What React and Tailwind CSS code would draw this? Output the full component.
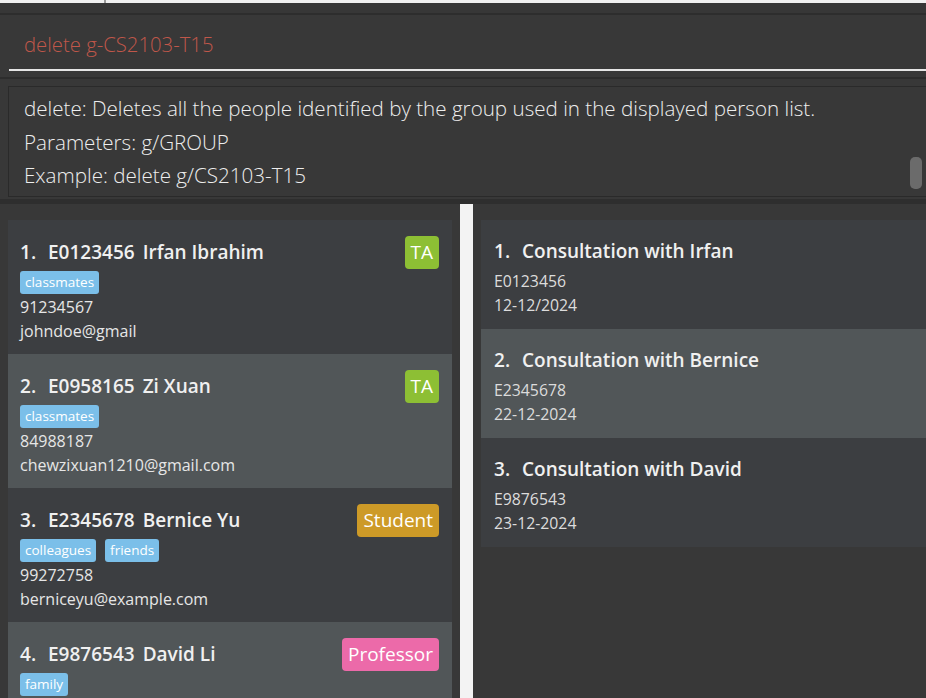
import React from "react";

const persons = [
  { n: 1, id: "E0123456", name: "Irfan Ibrahim", role: "TA", tags: ["classmates"], phone: "91234567", email: "johndoe@gmail", even: false },
  { n: 2, id: "E0958165", name: "Zi Xuan", role: "TA", tags: ["classmates"], phone: "84988187", email: "chewzixuan1210@gmail.com", even: true },
  { n: 3, id: "E2345678", name: "Bernice Yu", role: "Student", tags: ["colleagues", "friends"], phone: "99272758", email: "berniceyu@example.com", even: false },
  { n: 4, id: "E9876543", name: "David Li", role: "Professor", tags: ["family"], phone: "", email: "", even: true },
];

const consults = [
  { n: 1, title: "Consultation with Irfan", id: "E0123456", date: "12-12/2024", even: false },
  { n: 2, title: "Consultation with Bernice", id: "E2345678", date: "22-12-2024", even: true },
  { n: 3, title: "Consultation with David", id: "E9876543", date: "23-12-2024", even: false },
];

function RoleBadge({ role }) {
  const cls =
    role === "TA"
      ? "bg-[#8dbf34]"
      : role === "Student"
      ? "bg-[#cd9a27]"
      : "bg-[#ec6aa9]";
  return (
    <div className={`${cls} h-[33px] px-[6px] rounded-[4px] flex items-center text-[19px] text-white leading-none`}>
      {role}
    </div>
  );
}

function PersonCard({ p }) {
  return (
    <div className={`${p.even ? "bg-[#515658]" : "bg-[#3c3e41]"} h-[134px] shrink-0 pl-[12px] pr-[13px] pt-[16px]`}>
      <div className="flex items-center justify-between h-[33px]">
        <div className="flex items-center text-[19px] font-semibold text-[#f0f0f0]">
          <span className="w-[28px]">{p.n}.</span>
          <span className="mr-[8px]">{p.id}</span>
          <span>{p.name}</span>
        </div>
        <RoleBadge role={p.role} />
      </div>
      <div className="flex gap-[9px] mt-[2px]">
        {p.tags.map((t) => (
          <span key={t} className="bg-[#7bbfe9] text-white text-[13.5px] h-[23px] leading-[23px] px-[5px] rounded-[3px]">
            {t}
          </span>
        ))}
      </div>
      <div className="pt-[1px]">
        {p.phone && <div className="text-[16px] leading-[24px] text-[#e6e6e6]">{p.phone}</div>}
        {p.email && <div className="text-[16px] leading-[24px] text-[#e6e6e6]">{p.email}</div>}
      </div>
    </div>
  );
}

function ConsultCard({ c }) {
  return (
    <div className={`${c.even ? "bg-[#515658]" : "bg-[#3c3e41]"} h-[109px] shrink-0 pl-[13px] pt-[16px]`}>
      <div className="flex items-center h-[30px] text-[19px] font-semibold text-[#f0f0f0]">
        <span className="w-[28px]">{c.n}.</span>
        <span>{c.title}</span>
      </div>
      <div className="mt-[3px] text-[15.8px] leading-[24px] text-[#dcdcdc]">{c.id}</div>
      <div className="text-[15.8px] leading-[24px] text-[#dcdcdc]">{c.date}</div>
    </div>
  );
}

export default function App() {
  return (
    <div
      className="w-[926px] h-[698px] bg-[#383838] overflow-hidden flex flex-col"
      style={{ fontFamily: '"Segoe UI", "Open Sans", "Noto Sans", sans-serif' }}
    >
      <div className="h-[3px] bg-[#f0f0f0] shrink-0 relative">
        <div className="absolute left-[104px] top-0 w-[2px] h-[3px] bg-[#9a9a9a]" />
      </div>
      <div className="h-[10px] shrink-0 bg-[#373737]" />
      <div className="h-[2px] shrink-0 bg-[#2d2d2d]" />
      <div className="h-[54px] shrink-0 flex items-center pl-[24px] pt-[4px] text-[20.3px] font-light text-[#c0574a]">
        delete g-CS2103-T15
      </div>
      <div className="ml-[9px] h-[2px] shrink-0 bg-[#e6e6e6]" />
      <div className="h-[6px] shrink-0" />
      <div className="h-[2px] shrink-0 bg-[#2d2d2d]" />
      <div className="h-[7px] shrink-0" />
      <div className="ml-[8px] h-[111px] shrink-0 border border-r-0 border-[#2a2a2a] bg-[#383838] relative pl-[15px] pt-[5px]">
        <div className="text-[20.6px] leading-[33.5px] font-light text-[#eeeeee]">
          <div>delete: Deletes all the people identified by the group used in the displayed person list.</div>
          <div>Parameters: g/GROUP</div>
          <div>Example: delete g/CS2103-T15</div>
        </div>
        <div className="absolute right-[4px] top-[70px] w-[12px] h-[32px] rounded-[5px] bg-[#6b6b6b]" />
      </div>
      <div className="h-[2px] shrink-0" />
      <div className="h-[5px] shrink-0 bg-[#2e2e2e]" />
      <div className="flex-1 flex min-h-0">
        <div className="w-[460px] shrink-0 pl-[8px] pr-[8px] pt-[16px] flex flex-col overflow-hidden">
          {persons.map((p) => (
            <PersonCard key={p.n} p={p} />
          ))}
        </div>
        <div className="w-[13px] shrink-0 bg-[#f3f3f3]" />
        <div className="flex-1 pl-[8px] pt-[16px] flex flex-col overflow-hidden">
          {consults.map((c) => (
            <ConsultCard key={c.n} c={c} />
          ))}
        </div>
      </div>
    </div>
  );
}
